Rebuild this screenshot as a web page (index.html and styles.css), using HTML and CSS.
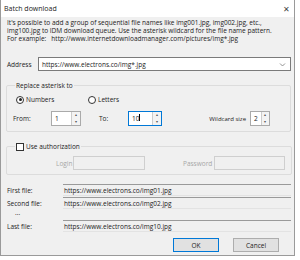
FILE: index.html
```html
<!DOCTYPE html>
<html lang="en">
<head>
    <meta charset="UTF-8">
    <title>Batch download</title>
    <link rel="stylesheet" href="styles.css">
</head>
<body>
    <div class="dialog">
        <div class="titlebar">
            <span class="title">Batch download</span>
            <span class="close">&#x2715;</span>
        </div>
        <div class="content">
            <p class="intro">
                It's possible to add a group of sequential file names like img001.jpg, img002.jpg, etc.,<br>
                img100.jpg to IDM download queue. Use the asterisk wildcard for the file name pattern.<br>
                For example: &nbsp; http://www.internetdownloadmanager.com/pictures/img*.jpg
            </p>

            <div class="address-row">
                <label>Address</label>
                <div class="combo">
                    <span>https://www.electrons.co/img*.jpg</span>
                    <svg width="7" height="5" viewBox="0 0 7 5"><path d="M1 1.5 L3.5 4 L6 1.5" fill="none" stroke="#777" stroke-width="0.8"/></svg>
                </div>
            </div>

            <fieldset class="group replace">
                <legend>Replace asterisk to</legend>
                <div class="radios">
                    <label class="radio"><span class="dot checked"></span>Numbers</label>
                    <label class="radio"><span class="dot"></span>Letters</label>
                </div>
                <div class="spins">
                    <span class="lbl-from">From:</span>
                    <div class="spin"><span class="val">1</span><span class="arrows"><i>&#9652;</i><i>&#9662;</i></span></div>
                    <span class="lbl-to">To:</span>
                    <div class="spin focused"><span class="val">10<b class="caret"></b></span><span class="arrows"><i>&#9652;</i><i>&#9662;</i></span></div>
                    <span class="lbl-wild">Wildcard size</span>
                    <div class="spin small"><span class="val">2</span><span class="arrows"><i>&#9652;</i><i>&#9662;</i></span></div>
                </div>
            </fieldset>

            <fieldset class="group auth">
                <legend><span class="check"></span>Use authorization</legend>
                <div class="auth-row">
                    <span class="dim lbl-login">Login</span>
                    <span class="field off login"></span>
                    <span class="dim lbl-pass">Password</span>
                    <span class="field off pass"></span>
                </div>
            </fieldset>

            <div class="files">
                <span>First file:</span>
                <span class="ro">https://www.electrons.co/img01.jpg</span>
                <span>Second file:</span>
                <span class="ro">https://www.electrons.co/img02.jpg</span>
                <span class="dots">...</span>
                <span></span>
                <span>Last file:</span>
                <span class="ro">https://www.electrons.co/img10.jpg</span>
            </div>

            <div class="buttons">
                <button class="btn default">OK</button>
                <button class="btn">Cancel</button>
            </div>
        </div>
    </div>
</body>
</html>
```

FILE: styles.css
```css
body {
    margin: 0;
    width: 300px;
    height: 260px;
    background: #ffffff;
    font-family: "Open Sans", "Liberation Sans", sans-serif;
    font-size: 6.5px;
    color: #222;
    overflow: hidden;
}

.dialog {
    width: 293px;
    height: 255px;
    border: 1px solid #9a9a9a;
    border-top: none;
    background: #f0f0f0;
    display: flex;
    flex-direction: column;
}

.titlebar {
    height: 17px;
    background: #ffffff;
    display: flex;
    align-items: center;
    justify-content: space-between;
    padding: 0 4px 0 3px;
    font-size: 7px;
}

.close {
    font-size: 8px;
    color: #444;
}

.content {
    padding: 2px 3px 0 6px;
    display: flex;
    flex-direction: column;
}

.intro {
    margin: 0;
    line-height: 8px;
}

.address-row {
    display: flex;
    align-items: center;
    margin-top: 14px;
}

.address-row label {
    width: 31px;
}

.combo {
    flex: 1;
    height: 12px;
    background: #fff;
    border: 1px solid #7a7a7a;
    display: flex;
    align-items: center;
    justify-content: space-between;
    padding: 0 4px 0 3px;
}

.group {
    margin: 10px 0 0 -1px;
    padding: 0 6px;
    border: 1px solid #dcdcdc;
    border-radius: 2px;
}

.group legend {
    padding: 0 1px;
    margin-left: 2px;
    display: flex;
    align-items: center;
}

.radios {
    display: flex;
    gap: 24px;
    margin-top: 5px;
    padding-left: 3px;
}

.radio {
    display: flex;
    align-items: center;
    gap: 2px;
    width: 48px;
}

.dot {
    width: 8px;
    height: 8px;
    border: 1px solid #333;
    border-radius: 50%;
    background: #fff;
    box-sizing: border-box;
    position: relative;
}

.dot.checked::after {
    content: "";
    position: absolute;
    left: 1.5px;
    top: 1.5px;
    width: 3px;
    height: 3px;
    border-radius: 50%;
    background: #222;
}

.spins {
    display: flex;
    align-items: center;
    margin: 7px 0 5px;
}

.lbl-from { width: 38px; }
.lbl-to { width: 29px; margin-left: 18px; }
.lbl-wild { margin-left: auto; margin-right: 4px; font-size: 6px; }

.spin {
    display: flex;
    height: 15px;
    width: 30px;
    border: 1px solid #aaa;
    background: #fff;
    box-sizing: border-box;
}

.spin.focused {
    border-color: #0078d7;
    width: 34px;
}

.spin.small {
    width: 20px;
    margin-right: 14px;
}

.spin .val {
    flex: 1;
    padding: 2px 3px;
    display: flex;
    align-items: flex-start;
}

.caret {
    width: 1px;
    height: 7px;
    background: #000;
}

.arrows {
    width: 8px;
    display: flex;
    flex-direction: column;
    border-left: 1px solid #ccc;
    background: #f3f3f3;
}

.arrows i {
    flex: 1;
    font-style: normal;
    font-size: 4px;
    line-height: 6px;
    text-align: center;
    color: #555;
}

.auth {
    margin-top: 10px;
    padding-bottom: 3px;
}

.check {
    width: 8px;
    height: 8px;
    border: 1px solid #333;
    background: #fff;
    margin-right: 2px;
    box-sizing: border-box;
}

.auth-row {
    display: flex;
    align-items: center;
    height: 16px;
    margin-top: 4px;
}

.dim { color: #a6a6a6; }
.lbl-login { margin-left: 43px; width: 17px; }
.lbl-pass { margin-left: 38px; width: 31px; }

.field.off {
    height: 14px;
    border: 1px solid #cfcfcf;
    background: #f0f0f0;
    box-sizing: border-box;
}

.login { width: 72px; }
.pass { width: 71px; }

.files {
    display: grid;
    grid-template-columns: 56px 1fr;
    row-gap: 1px;
    margin-top: 9px;
    align-items: center;
}

.files .ro {
    height: 12px;
    line-height: 11px;
    border-top: 1px solid #9a9a9a;
    border-bottom: 1px solid #e3e3e3;
    padding-left: 1px;
    box-sizing: border-box;
}

.dots {
    padding-left: 8px;
    height: 9px;
    line-height: 6px;
}

.buttons {
    display: flex;
    justify-content: flex-end;
    gap: 14px;
    margin-top: 6px;
    padding-right: 12px;
}

.btn {
    width: 46px;
    height: 14px;
    padding: 0;
    font: inherit;
    color: #222;
    background: #e1e1e1;
    border: 1px solid #adadad;
}

.btn.default {
    border: 1px solid #0078d7;
}
```
